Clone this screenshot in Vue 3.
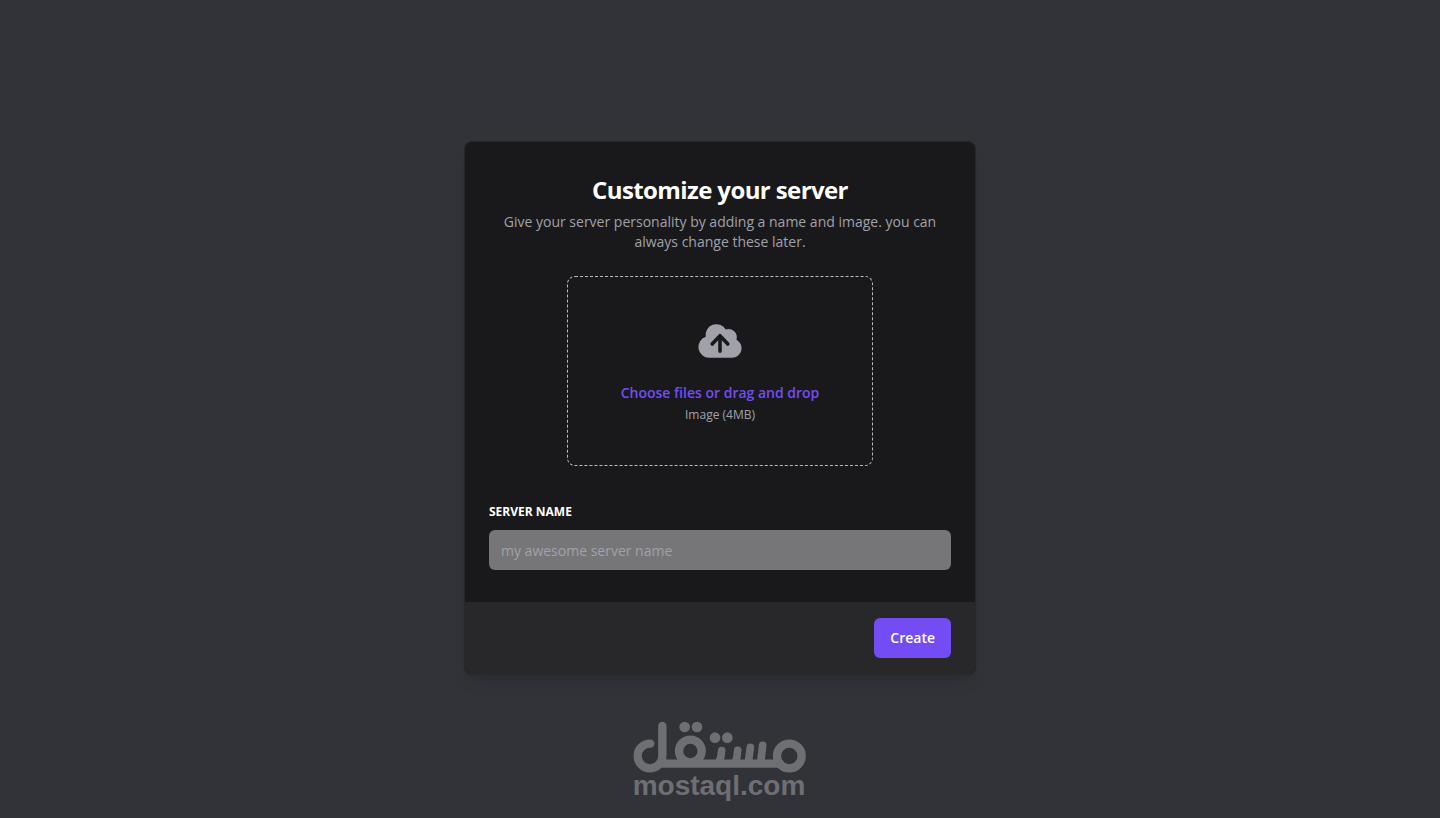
<script setup>
import { ref } from 'vue'

const serverName = ref('')
</script>

<template>
  <main class="page">
    <form class="dialog" @submit.prevent>
      <header class="header">
        <h1 class="title">Customize your server</h1>
        <p class="description">
          Give your server personality by adding a name and image. you can always change these later.
        </p>
      </header>

      <div class="body">
        <label class="dropzone" for="server-image">
          <svg class="cloud" viewBox="0 0 20 20" aria-hidden="true">
            <path
              fill="currentColor"
              fill-rule="evenodd"
              clip-rule="evenodd"
              d="M5.5 17a4.5 4.5 0 0 1-1.44-8.765a4.5 4.5 0 0 1 8.302-3.046a3.5 3.5 0 0 1 4.504 4.272A4 4 0 0 1 15 17H5.5Zm3.75-2.75a.75.75 0 0 0 1.5 0V9.66l1.95 2.1a.75.75 0 1 0 1.1-1.02l-3.25-3.5a.75.75 0 0 0-1.1 0l-3.25 3.5a.75.75 0 1 0 1.1 1.02l1.95-2.1v4.59Z"
            />
          </svg>
          <span class="choose">Choose files or drag and drop</span>
          <span class="hint">Image (4MB)</span>
          <input id="server-image" class="file" type="file" accept="image/*" />
        </label>

        <div class="field">
          <label class="field-label" for="server-name">Server name</label>
          <input
            id="server-name"
            v-model="serverName"
            class="field-input"
            type="text"
            placeholder="my awesome server name"
          />
        </div>
      </div>

      <footer class="footer">
        <button class="create" type="submit">Create</button>
      </footer>
    </form>

    <div class="watermark">
      <svg class="mark" viewBox="36 34 522 156" aria-hidden="true">
        <g fill="none" stroke="currentColor" stroke-width="25" stroke-linecap="round" stroke-linejoin="round">
          <path d="M91 102A37 37 0 1 0 127 139V49" />
          <path d="M123 162H480" />
          <circle cx="211" cy="124" r="34" />
          <circle cx="508" cy="139" r="37" />
          <path stroke-width="23" d="M305 123Q304 145 296 160M353 122Q352 145 345 160M391 113L385 160M428 107L422 160" />
        </g>
        <g fill="currentColor">
          <circle cx="194" cy="52" r="16" />
          <circle cx="231" cy="52" r="16" />
          <circle cx="285" cy="84" r="16" />
          <circle cx="322" cy="84" r="16" />
        </g>
      </svg>
      <span class="domain">mostaql.com</span>
    </div>
  </main>
</template>

<style>
body {
  margin: 0;
  background: #323338;
}
</style>

<style scoped>
.page,
.page * {
  box-sizing: border-box;
}

.page {
  position: relative;
  display: flex;
  align-items: center;
  justify-content: center;
  min-height: 100vh;
  padding: 16px 16px 18px;
  background: #323338;
  color: #ffffff;
  font-family: "Open Sans", "Noto Sans", sans-serif;
  font-size: 14px;
  line-height: 20px;
}

.dialog {
  width: 100%;
  max-width: 512px;
  overflow: hidden;
  border: 1px solid #28282a;
  border-radius: 8px;
  background: #19191b;
  box-shadow: 0 10px 15px -3px rgba(0, 0, 0, 0.1), 0 4px 6px -4px rgba(0, 0, 0, 0.1);
}

.header {
  display: flex;
  flex-direction: column;
  gap: 6px;
  padding: 32px 24px 0;
  text-align: center;
}

.title {
  margin: 0;
  font-size: 24px;
  font-weight: 700;
  line-height: 32px;
  letter-spacing: -0.025em;
}

.description {
  margin: 0;
  color: #a1a1aa;
}

.body {
  display: flex;
  flex-direction: column;
  gap: 36px;
  padding: 24px 24px 32px;
}

.dropzone {
  display: flex;
  flex-direction: column;
  align-items: center;
  align-self: center;
  width: 306px;
  max-width: 100%;
  padding: 40px 24px;
  border: 1px dashed #bbbbbc;
  border-radius: 8px;
  text-align: center;
  cursor: pointer;
}

.cloud {
  width: 48px;
  height: 48px;
  color: #a1a1aa;
}

.choose {
  margin-top: 16px;
  color: #734df3;
  font-weight: 600;
  line-height: 24px;
}

.hint {
  color: #a1a1aa;
  font-size: 12px;
}

.file {
  position: absolute;
  width: 1px;
  height: 1px;
  overflow: hidden;
  opacity: 0;
}

.field {
  display: flex;
  flex-direction: column;
  gap: 8px;
}

.field-label {
  font-size: 12px;
  font-weight: 700;
  line-height: 20px;
  text-transform: uppercase;
}

.field-input {
  width: 100%;
  height: 40px;
  padding: 8px 12px;
  border: 0;
  border-radius: 6px;
  background: #767678;
  color: #000000;
  font: inherit;
}

.field-input::placeholder {
  color: #a1a1aa;
  opacity: 1;
}

.footer {
  display: flex;
  justify-content: flex-end;
  padding: 16px 24px;
  background: #28282a;
}

.create {
  height: 40px;
  padding: 8px 16px;
  border: 0;
  border-radius: 6px;
  background: #734df3;
  color: #ffffff;
  font: inherit;
  font-weight: 600;
  cursor: pointer;
}

.watermark {
  position: absolute;
  right: 2px;
  bottom: 19px;
  left: 0;
  display: flex;
  flex-direction: column;
  align-items: center;
  color: #6e6f73;
  pointer-events: none;
}

.mark {
  width: 174px;
  height: 52px;
}

.domain {
  font-family: "Liberation Sans", Arial, sans-serif;
  font-size: 28px;
  font-weight: 700;
  line-height: 26px;
}
</style>
